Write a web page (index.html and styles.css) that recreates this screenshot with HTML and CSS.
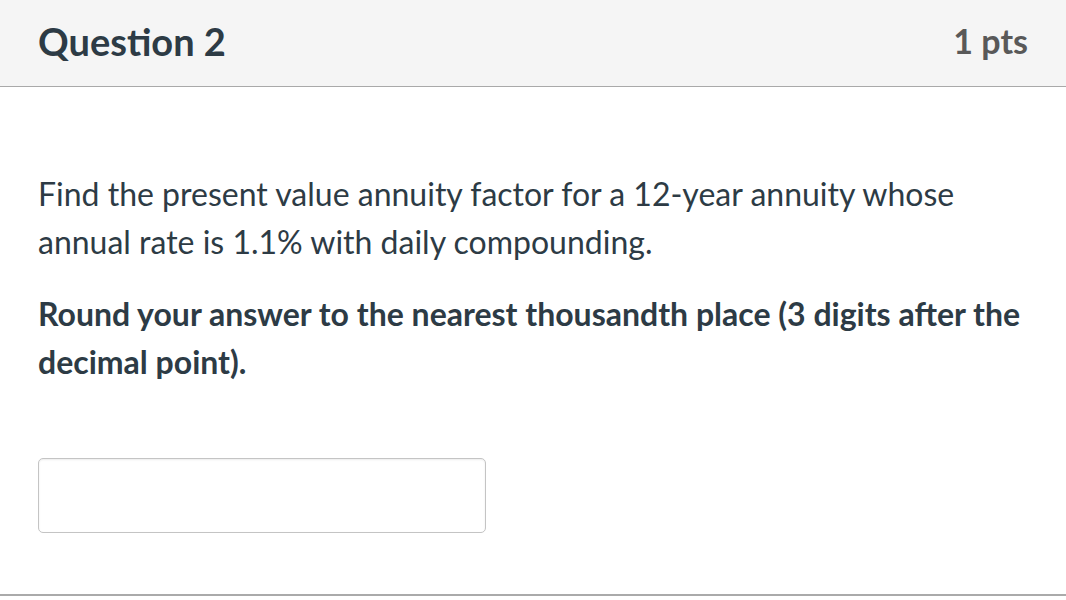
FILE: index.html
```html
<!DOCTYPE html>
<html>
<head>
<meta charset="utf-8">
<link rel="stylesheet" href="styles.css">
</head>
<body>
<div class="question">
  <div class="q-header">
    <h2 class="q-title">Question 2</h2>
    <span class="q-points">1 pts</span>
  </div>
  <div class="q-body">
    <p class="q-text">Find the present value annuity factor for a 12-year annuity whose annual rate is 1.1% with daily compounding.</p>
    <p class="q-text q-strong">Round your answer to the nearest thousandth place (3 digits after the decimal point).</p>
    <div class="q-answer"><input class="q-input" type="text"></div>
  </div>
</div>
</body>
</html>
```
FILE: styles.css
```css
html, body {
  margin: 0;
  padding: 0;
  background: #ffffff;
}
body {
  font-family: Lato, "Open Sans", sans-serif;
  color: #2d3b45;
}
.question {
  width: 1066px;
  height: 594px;
  border-bottom: 2px solid #aaaaaa;
  box-sizing: content-box;
}
.q-header {
  height: 87px;
  box-sizing: border-box;
  background: #f5f5f5;
  border-bottom: 1px solid #a9a9a9;
  display: flex;
  align-items: center;
  justify-content: space-between;
  padding: 0 38px 5px 38px;
}
.q-title {
  margin: 0;
  font-size: 38px;
  font-weight: 700;
  color: #2d3b45;
}
.q-points {
  font-size: 34px;
  font-weight: 700;
  color: #595959;
}
.q-body {
  padding: 83px 38px 0 38px;
}
.q-text {
  margin: 0 0 24px 0;
  font-size: 32px;
  line-height: 48px;
  max-width: 990px;
}
.q-strong {
  font-weight: 700;
}
.q-answer {
  padding-top: 48px;
}
.q-input {
  display: block;
  width: 448px;
  height: 75px;
  box-sizing: border-box;
  border: 1px solid #c4c4c4;
  border-radius: 5px;
  box-shadow: inset 0 1px 2px rgba(0,0,0,0.08);
  margin: 0;
  padding: 0 12px;
  font-family: Lato, sans-serif;
  font-size: 27px;
}
```
